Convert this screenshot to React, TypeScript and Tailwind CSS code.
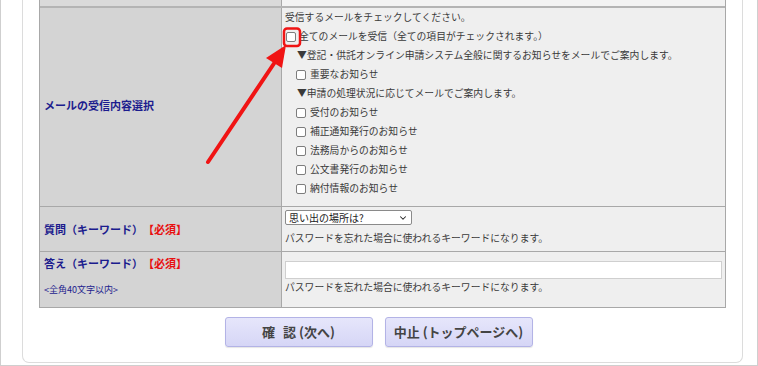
import { ChevronDown } from "lucide-react"

const font = { fontFamily: '"Noto Sans CJK JP", "Noto Sans", sans-serif' }

function Box() {
  return <span className="inline-block w-[10px] h-[10px] border border-[#7d7d7d] rounded-[2px] bg-white shrink-0" />
}

function CheckLine({ label }: { label: string }) {
  return (
    <div className="flex items-center gap-[4px] pl-[11px] h-[19px]">
      <Box />
      <span>{label}</span>
    </div>
  )
}

export default function App() {
  const items = ["受付のお知らせ", "補正通知発行のお知らせ", "法務局からのお知らせ", "公文書発行のお知らせ", "納付情報のお知らせ"]

  return (
    <div className="w-[758px] h-[366px] bg-white border-x border-b border-[#cfcfcf] overflow-hidden relative" style={font}>
      <div className="ml-[21px] mr-[14px] h-[363px] border-x border-b border-[#dcdcdc] rounded-b-[7px] pl-[16px] pr-[16px]">
        <div className="border-x border-b border-[#a8a8a8] text-[9.8px] text-[#3a3a3a]">
          {/* previous row (cut off) */}
          <div className="grid grid-cols-[242px_1fr] h-[8px] border-b-2 border-[#b4b4b4]">
            <div className="bg-[#dadada] border-r border-[#a8a8a8]" />
            <div className="bg-[#f3f3f3]" />
          </div>

          {/* mail selection */}
          <div className="grid grid-cols-[242px_1fr] border-b border-[#a8a8a8]">
            <div className="bg-[#d4d4d4] border-r border-[#a8a8a8] flex items-center pl-[4px] pb-[3px]">
              <span className="text-[11px] font-bold text-[#1c1c8e]">メールの受信内容選択</span>
            </div>
            <div className="bg-[#efefef] pl-[3px] pb-[8px] leading-[19px]">
              <div className="h-[19px]">受信するメールをチェックしてください。</div>
              <div className="flex items-center gap-[3px] h-[19px] pl-[1px]">
                <Box />
                <span>全てのメールを受信（全ての項目がチェックされます。）</span>
              </div>
              <div className="pl-[12px] h-[19px]">▼登記・供託オンライン申請システム全般に関するお知らせをメールでご案内します。</div>
              <CheckLine label="重要なお知らせ" />
              <div className="pl-[12px] h-[19px]">▼申請の処理状況に応じてメールでご案内します。</div>
              {items.map((it) => (
                <CheckLine key={it} label={it} />
              ))}
            </div>
          </div>

          {/* question */}
          <div className="grid grid-cols-[242px_1fr] border-b border-[#a8a8a8] h-[45px]">
            <div className="bg-[#d4d4d4] border-r border-[#a8a8a8] flex items-center pl-[4px]">
              <span className="text-[11px] font-bold text-[#1c1c8e]">質問（キーワード）</span>
              <span className="text-[11px] font-bold text-[#e81010]">【必須】</span>
            </div>
            <div className="bg-[#efefef] pl-[3px] pt-[3px]">
              <div className="w-[127px] h-[15px] border border-[#8a8a8a] rounded-[2px] bg-white flex items-center justify-between pl-[3px] pr-[3px] text-[10px] text-[#222]">
                <span>思い出の場所は?</span>
                <ChevronDown size={10} strokeWidth={2.5} />
              </div>
              <div className="mt-[4px] leading-[19px]">パスワードを忘れた場合に使われるキーワードになります。</div>
            </div>
          </div>

          {/* answer */}
          <div className="grid grid-cols-[242px_1fr] h-[55px]">
            <div className="bg-[#d4d4d4] border-r border-[#a8a8a8] pl-[4px] pt-[2px]">
              <div className="flex h-[18px] items-center">
                <span className="text-[11px] font-bold text-[#1c1c8e]">答え（キーワード）</span>
                <span className="text-[11px] font-bold text-[#e81010]">【必須】</span>
              </div>
              <div className="mt-[11px] text-[9px] text-[#1c1c8e]">&lt;全角40文字以内&gt;</div>
            </div>
            <div className="bg-[#efefef] pl-[3px] pt-[9px] pr-[3px]">
              <div className="h-[18px] border border-[#cfcfcf] bg-white" />
              <div className="leading-[17px]">パスワードを忘れた場合に使われるキーワードになります。</div>
            </div>
          </div>
        </div>

        {/* buttons */}
        <div className="flex justify-center gap-[12px] mt-[9px] pr-[8px]">
          <button className="w-[148px] h-[30px] rounded-[3px] border border-[#b3b3e6] bg-gradient-to-b from-[#e6e6fb] to-[#d6d6f6] text-[13px] font-bold text-[#444] shadow-[0_1px_1px_rgba(0,0,0,0.1)]">
            確<span className="inline-block w-[8px]" />認 (次へ)
          </button>
          <button className="w-[148px] h-[30px] rounded-[3px] border border-[#b3b3e6] bg-gradient-to-b from-[#e6e6fb] to-[#d6d6f6] text-[13px] font-bold text-[#444] shadow-[0_1px_1px_rgba(0,0,0,0.1)]">
            中止 (トップページへ)
          </button>
        </div>
      </div>

      {/* annotation overlay */}
      <svg className="absolute left-0 top-0 pointer-events-none" width="758" height="366">
        <rect x="283" y="28.5" width="16" height="17.5" rx="3" fill="none" stroke="#f01414" strokeWidth="2.5" />
        <line x1="207" y1="162" x2="274" y2="62" stroke="#f01414" strokeWidth="4" strokeLinecap="round" />
        <polygon points="285,45 265,58 281,68" fill="#f01414" />
      </svg>
    </div>
  )
}
